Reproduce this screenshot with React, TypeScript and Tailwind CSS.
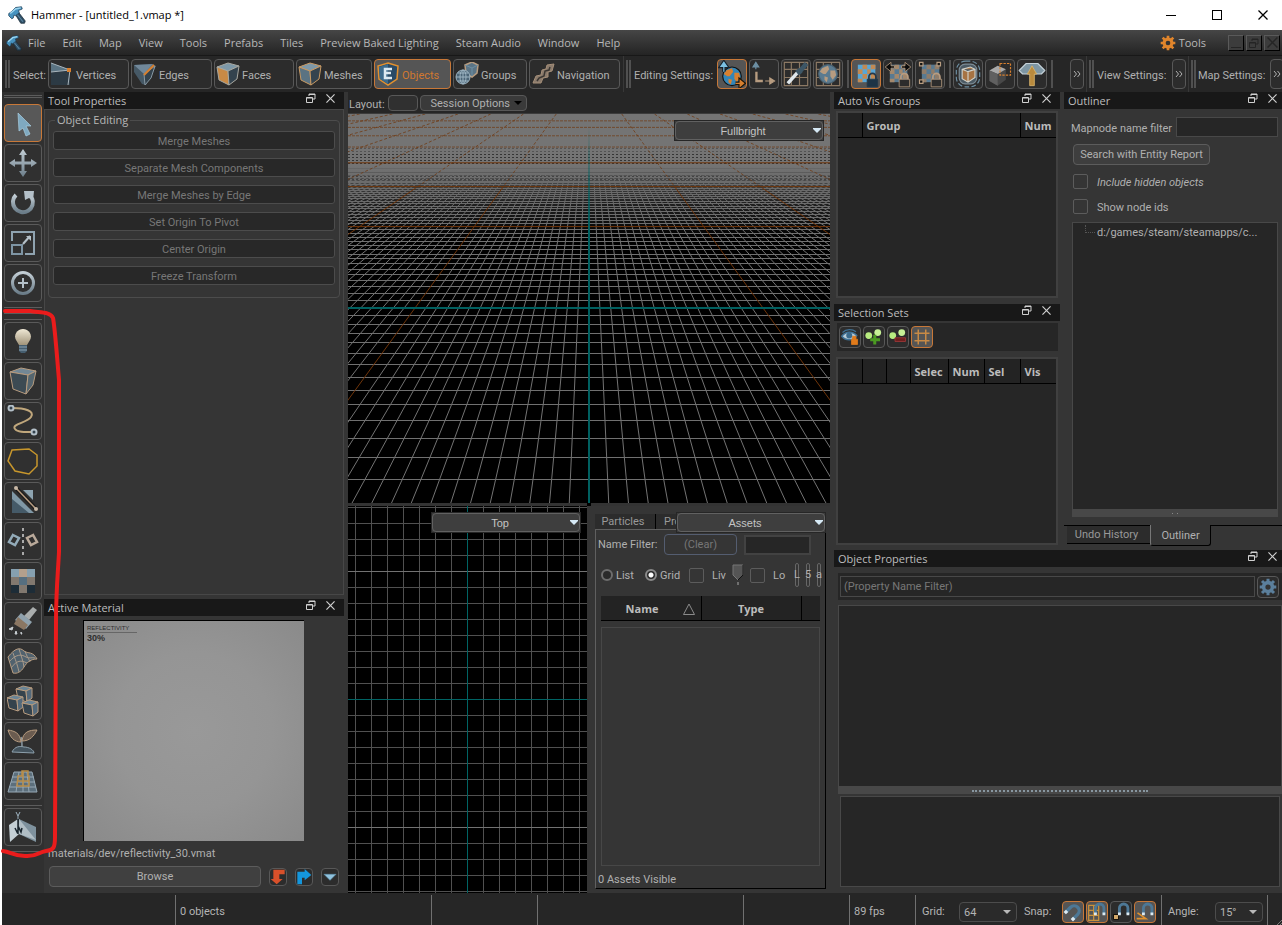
import type { ReactNode } from "react";
import clsx from "clsx";

const SLATE = "#6d8fa3";
const TAN = "#b79c80";
const STEEL = "#b4c0c8";
const ORANGE = "#d8802f";

const menuItems = [
  "File", "Edit", "Map", "View", "Tools", "Prefabs", "Tiles",
  "Preview Baked Lighting", "Steam Audio", "Window", "Help",
];

const objectActions = [
  "Merge Meshes",
  "Separate Mesh Components",
  "Merge Meshes by Edge",
  "Set Origin To Pivot",
  "Center Origin",
  "Freeze Transform",
];

/* ── Icons ── */

function Icon({ size = 24, children }: { size?: number; children: ReactNode }) {
  return (
    <svg width={size} height={size} viewBox="0 0 24 24" fill="none" className="shrink-0" aria-hidden="true">
      {children}
    </svg>
  );
}

function HammerLogo({ size }: { size: number }) {
  return (
    <Icon size={size}>
      <path d="M9 10L13 7L23 20L22 23H17Z" fill="#2f4f66" stroke="#1b2c39" />
      <path d="M12 11L20 21" stroke="#5c87a3" strokeWidth="1.500" />
      <path d="M1 10L4 8L10 2L18 1L19 4L14 6L15 9L10 13L8 12L7 16L5 17L1 13Z" fill="#4692bf" stroke="#1f4059" />
      <path d="M3 10L10 4L17 2.500" stroke="#9dd6f0" strokeWidth="2" />
    </Icon>
  );
}

function Cube({ top = "#7d98a8", left = "#4f6674", right = "#34434e", edge = "#8d9da6" }) {
  return (
    <g stroke={edge} strokeWidth="1" strokeLinejoin="round">
      <path d="M1 5L12 1L23 4L12 9Z" fill={top} />
      <path d="M1 5L12 9L13 23L3 18Z" fill={left} />
      <path d="M12 9L23 4L21 17L13 23Z" fill={right} />
    </g>
  );
}

const Vertices = () => (
  <Icon>
    <path d="M1 1L20 8V23H1Z" fill="#2c3a44" />
    <path d="M1 1L20 8L1 10Z" fill="#5b7483" />
    <path d="M1 1L20 8L18 23M20 8L1 10" stroke="#a9b5bc" />
    <rect x="17" y="6" width="4" height="4" fill={ORANGE} />
  </Icon>
);
const Edges = () => (
  <Icon>
    <path d="M1 3L20 2L23 4L13 23L9 22L1 10Z" fill="#465966" />
    <path d="M1 3L20 2L11 12Z" fill="#71889a" />
    <path d="M22 4L18 16L12 23L11 12Z" fill="#33424d" stroke="#8798a3" />
    <path d="M21 3L11 13" stroke={ORANGE} strokeWidth="2" />
  </Icon>
);
const Faces = () => <Icon><Cube left="#c98a45" edge="#a8a8a0" /></Icon>;
const Meshes = () => <Icon><Cube edge="#c99a63" left="#5b7382" /></Icon>;
const Objects = () => (
  <Icon>
    <path d="M12 1L22 4L21 17L12 23L3 17L2 4Z" fill="#294a66" stroke="#e2902e" strokeWidth="1.5" />
    <path d="M12 2V22L4 17L3 5Z" fill="#3d6b8c" />
    <path d="M16 7H9V16H16M9 11H15" stroke="#dbe9f2" strokeWidth="2.5" />
  </Icon>
);
const Groups = () => (
  <Icon>
    <path d="M10 3L17 0L23 3L22 11L17 15L11 12Z" fill="#5b7485" stroke={TAN} strokeWidth="1.5" />
    <path d="M10 3L17 6L23 3M17 6V14" stroke={SLATE} />
    <circle cx="8" cy="15" r="7" fill="#4b6577" stroke="#9db4c2" />
    <path d="M1 15H15M8 8V22M3 11H13M3 19H13" stroke="#9db4c2" />
    <ellipse cx="8" cy="15" rx="3" ry="7" stroke="#9db4c2" />
  </Icon>
);
const Navigation = () => (
  <Icon>
    <path d="M2 21L5 14L10 13L11 8L15 7L16 3L23 2L21 9L17 10L17 15L12 16L10 21Z" fill="#8b7b6c" stroke="#a58f79" />
    <path d="M6 19L8 16L13 14L14 9L18 8L19 5" stroke="#3a3632" strokeWidth="1.500" />
  </Icon>
);

const Globe = ({ cx = 12, cy = 12, r = 8, dim = false }) => (
  <g>
    <circle cx={cx} cy={cy} r={r} fill={dim ? "#5b7b90" : "#3486b8"} stroke={dim ? "#4a6272" : "#111"} />
    <path
      transform={`translate(${cx - 8} ${cy - 8})`}
      d="M3 3L8 1L9 4L6 8L4 8L1 6ZM10 5L14 5L15 9L12 13L10 10ZM5 10L8 11L7 15L5 13Z"
      fill={dim ? TAN : ORANGE}
    />
  </g>
);
const WorldSpace = () => (
  <Icon size={28}>
    <Globe cx={12} cy={14} />
    <path d="M5 10V4M2.500 5.500L5 2L7.500 5.500Z" stroke="#16222c" strokeWidth="3" />
    <path d="M5 10V4M2.500 5.500L5 2L7.500 5.500Z" stroke="#7cc0e2" fill="#7cc0e2" />
    <path d="M15 20H21M19 17.500L22 20L19 22.500Z" stroke="#1c1408" strokeWidth="3" />
    <path d="M15 20H21M19 17.500L22 20L19 22.500Z" stroke={ORANGE} fill={ORANGE} />
  </Icon>
);
const LocalSpace = () => (
  <Icon size={28}>
    <path d="M5 8V4M2.500 6L5 2L7.500 6Z" stroke={SLATE} fill={SLATE} />
    <path d="M5.500 10V18H11" stroke={TAN} strokeWidth="2" />
    <path d="M13 18H19M17 15.500L21 18L17 20.500Z" stroke={TAN} fill={TAN} />
  </Icon>
);
const GridLines = () => <path d="M2 2H22V22H2ZM2 8H22M2 15H22M8 2V22M15 2V22" stroke="#8c7964" />;
const GridPick = () => (
  <Icon size={28}>
    <GridLines />
    <path d="M5 20L14 10" stroke="#dfe7ec" strokeWidth="3" />
    <path d="M13 8L16 12M15 10L21 3" stroke="#3d5666" strokeWidth="4" />
  </Icon>
);
const GridGlobe = () => <Icon size={28}><GridLines /><Globe dim r={8} /></Icon>;

const Checker = ({ a = "#58a6d6", b = "#c28a54" }) => (
  <g>
    <path d="M5 4H20V19H5Z" fill={a} />
    <path d="M9 4H13V8H9ZM16 4H20V8H16ZM5 8H9V12H5ZM13 8H16V12H13ZM9 12H13V16H9ZM16 12H20V16H16ZM5 16H9V19H5ZM13 16H16V19H13Z" fill={b} />
  </g>
);
const Lock = ({ fill = "#1d3446", edge = "#8fa6b5" }) => (
  <g>
    <path d="M14.500 17V14.500A3 3 0 0 1 20.500 14.500V17" stroke={edge} strokeWidth="1.500" />
    <path d="M13 16.500H22V23H13Z" fill={fill} stroke={edge} strokeWidth=".7" />
  </g>
);
const TexLock = () => <Icon size={28}><Checker /><Lock edge="#24394a" /></Icon>;
const TexScale = () => (
  <Icon size={28}>
    <Checker a="#587a92" b="#a3886c" />
    <path d="M1 6L6 2V5H9V7H6V10ZM23 6L18 2V5H15V7H18V10Z" fill="#0c0c0c" stroke={TAN} strokeWidth=".7" />
    <Lock fill="#2c2c2c" edge={TAN} />
  </Icon>
);
const TexVertex = () => (
  <Icon size={28}>
    <Checker a="#587a92" b="#8f7c69" />
    <path d="M3 2H6V5H3ZM18 2H21V5H18ZM3 17H6V20H3Z" fill="#141414" stroke={TAN} />
    <Lock fill="#2c2c2c" edge={TAN} />
  </Icon>
);
const Isolate = () => (
  <Icon size={28}>
    <rect x="2" y="1" width="20" height="22" rx="8" stroke={SLATE} strokeDasharray="4 2" />
    <rect x="4.500" y="3.500" width="15" height="17" rx="5" fill="#4b5a64" stroke="#7c8b94" />
    <path d="M7 8L14 6L18 8V15L12 19L7 16ZM7 8L12 10L18 8M12 10V19" fill="#a67343" stroke="#d0d0c8" />
  </Icon>
);
const BoxSelect = () => (
  <Icon size={28}>
    <path d="M3 9L10 5L17 8V17L10 22L3 18Z" fill="#484848" />
    <path d="M3 9L10 5L17 8L10 12Z" fill="#a9a9a9" />
    <path d="M10 12V22L3 18V9Z" fill="#606060" />
    <path d="M12 3H21V13H12Z" stroke={ORANGE} strokeDasharray="2 1" />
  </Icon>
);
const CloudUp = () => (
  <Icon size={28}>
    <path d="M1 9L7 3H17L23 9L20 12H4Z" fill="#7e96a3" stroke="#c5d2d9" strokeLinejoin="round" />
    <path d="M12 5L16 12H14V22H10V12H8Z" fill="#b98a3d" stroke="#d9b56d" strokeWidth=".7" />
  </Icon>
);

/* tool strip drawings, 32px each */
const Tool = ({ children }: { children: ReactNode }) => (
  <svg width="32" height="32" viewBox="0 0 32 32" fill="none" aria-hidden="true">
    <defs>
      <linearGradient id="steel" x1="0" y1="0" x2="0" y2="1">
        <stop offset="0" stopColor="#c3ced5" />
        <stop offset="1" stopColor="#6b7d89" />
      </linearGradient>
      <linearGradient id="bulb" x1="0" y1="0" x2="0" y2="1">
        <stop offset="0" stopColor="#efe8d5" />
        <stop offset="1" stopColor="#a1947a" />
      </linearGradient>
    </defs>
    {children}
  </svg>
);

const SmallCube = ({ x, y }: { x: number; y: number }) => (
  <g transform={`translate(${x} ${y})`} stroke={TAN} strokeWidth="1" strokeLinejoin="round">
    <path d="M0 3L7 0L16 2L10 5Z" fill="#6a8495" />
    <path d="M0 3L10 5L11 16L2 13Z" fill="#35434d" />
    <path d="M10 5L16 2L16 12L11 16Z" fill="#54697a" />
  </g>
);

const transformTools: { name: string; art: ReactNode }[] = [
  { name: "Select", art: <path d="M11 6L24 19L19 19L23 27L19 29L16 21L12 24Z" fill="#7fa9c0" stroke="#a8cde0" strokeWidth=".7" /> },
  {
    name: "Translate",
    art: <path d="M16 2L20 8H17.500V14.500H24V12L30 16L24 20V17.500H17.500V24H20L16 30L12 24H14.500V17.500H8V20L2 16L8 12V14.500H14.500V8H12Z" fill="url(#steel)" />,
  },
  {
    name: "Rotate",
    art: (
      <>
        <path d="M9 8A10 10 0 1 0 25 11" stroke="url(#steel)" strokeWidth="4" />
        <path d="M17 4H27L26 14L22 11L18 13Z" fill="#b4c0c8" />
      </>
    ),
  },
  {
    name: "Scale",
    art: (
      <g stroke="#8fa3b0" strokeWidth="2">
        <path d="M5 14V5H27V27H18" />
        <path d="M5 18H15V27H5Z" stroke="#7e95a4" />
        <path d="M16 17L23 9" stroke={STEEL} />
        <path d="M19 9H24V14Z" fill={STEEL} stroke="none" />
      </g>
    ),
  },
  {
    name: "Pivot",
    art: (
      <>
        <circle cx="16" cy="16" r="10.500" stroke="url(#steel)" strokeWidth="3" />
        <path d="M16 11V21M11 16H21" stroke={STEEL} strokeWidth="2" />
      </>
    ),
  },
];

const createTools: { name: string; art: ReactNode }[] = [
  {
    name: "Entity",
    art: (
      <>
        <path d="M12 20H20V26L18 28H14L12 26Z" fill="#455d6e" />
        <path d="M12 22H20M12 25H20" stroke="#8aa2b2" />
        <path d="M16 4A8 7.500 0 0 0 9 15L12 20H20L23 15A8 7.500 0 0 0 16 4Z" fill="url(#bulb)" />
      </>
    ),
  },
  {
    name: "Block",
    art: (
      <g stroke={TAN} strokeWidth="1" strokeLinejoin="round">
        <path d="M3 7L14 3L29 6L21 10Z" fill="#728795" />
        <path d="M3 7L21 10L19 29L6 24Z" fill="#3c4a53" />
        <path d="M21 10L29 6L26 20L19 29Z" fill="#55666f" />
      </g>
    ),
  },
  {
    name: "Path",
    art: (
      <>
        <path d="M5 3C18 3 28 6 24 12C20 18 4 19 8 24C11 28 20 27 27 27" stroke="#c0a77c" strokeWidth="2" />
        <circle cx="4" cy="3" r="2.500" fill="#33424d" stroke={STEEL} strokeWidth="2" />
        <circle cx="27" cy="27" r="2.500" fill="#33424d" stroke={STEEL} strokeWidth="2" />
      </>
    ),
  },
  { name: "Polygon", art: <path d="M5 5L22 4L30 10V21L22 29L8 26L1 16Z" stroke="#c8972c" strokeWidth="1.500" /> },
  {
    name: "Clip",
    art: (
      <>
        <path d="M5 6V28H27Z" fill="#8098a6" />
        <path d="M5 14V28H22Z" fill="#455a68" />
        <path d="M16 5H26V15Z" fill="#8da3b0" />
        <path d="M9 3L29 24" stroke="#1c1c1c" strokeWidth="4" />
        <path d="M9 3L29 24" stroke={TAN} strokeWidth="1.500" />
        <circle cx="9" cy="3" r="2" fill="#c8b8a6" />
        <circle cx="29" cy="24" r="2" fill="#c8b8a6" />
      </>
    ),
  },
  {
    name: "Mirror",
    art: (
      <>
        <path d="M16 3V31" stroke="#a9a9a9" strokeWidth="2" strokeDasharray="3 3" />
        <path d="M6 10L12 13L8 20L2 17Z" stroke="#93abb9" strokeWidth="2.500" />
        <path d="M26 10L20 13L24 20L30 17Z" stroke="#b9a99a" strokeWidth="2.500" />
      </>
    ),
  },
  {
    name: "Texture",
    art: (
      <>
        <path d="M4 4H28V28H4Z" fill="#81786f" />
        <path d="M4 4H12V12H4ZM20 4H28V12H20Z" fill="#86a0b0" />
        <path d="M12 12H20V20H12Z" fill="#566f80" />
        <path d="M4 20H12V28H4ZM20 20H28V28H20Z" fill="#1d2c37" />
        <path d="M12 4H20V12H12Z" fill="#b3a08d" />
      </>
    ),
  },
  {
    name: "Paint",
    art: (
      <>
        <path d="M26 2L30 5L22 15L17 11Z" fill="#a9adad" />
        <path d="M14 8L25 17L19 24L8 15Z" fill="#8fa1ad" />
        <path d="M11 12L21 20L17 25L7 19Z" fill="#8b7763" />
        <path d="M2 24L6 22L5 25ZM9 26L10 29L8 29ZM14 27L15 29L14 29Z" fill="#c8ced2" stroke="#c8ced2" />
      </>
    ),
  },
  {
    name: "Displacement",
    art: (
      <>
        <path d="M1 12C8 3 13 2 17 6C21 9 26 6 30 14C24 14 20 17 17 22C14 27 10 29 6 28Z" fill="#51626e" stroke={TAN} />
        <path d="M6 8C8 14 10 18 12 27M12 4C14 11 16 15 17 22M18 6C20 12 22 14 23 17M2 17C9 9 14 9 19 12C23 14 25 12 28 13M4 23C10 15 14 15 20 18" stroke="#a99a8a" />
      </>
    ),
  },
  { name: "Instances", art: <><SmallCube x={9} y={1} /><SmallCube x={0} y={10} /><SmallCube x={15} y={15} /></> },
  {
    name: "Foliage",
    art: (
      <>
        <path d="M5 27C8 21 13 21 17 22C22 22 27 25 27 28Z" fill="#44535d" stroke="#8da0ac" />
        <path d="M15 22C15 18 15 14 14 12" stroke="#8b9aa3" strokeWidth="1.500" />
        <path d="M1 5C8 6 13 8 14 17C7 17 3 12 1 5Z" fill="#6b5c50" stroke={TAN} />
        <path d="M30 5C22 5 16 7 15 16C23 16 27 11 30 5Z" fill="#6b5c50" stroke={TAN} />
      </>
    ),
  },
  {
    name: "Tile editor",
    art: (
      <>
        <path d="M7 7H25L30 27H1Z" fill="#5c6f7c" stroke="#97a9b5" />
        <path d="M5 12H27M4 17H28M2 22H29M12 7L9 27M16 7V27M20 7L22 27" stroke="#97a9b5" />
        <path d="M11 11H15V6H21V11H22V21H10ZM10 16H22M16 6V21" stroke="#b78d4a" strokeWidth="1.500" />
      </>
    ),
  },
];

const foldArt = (
  <>
    <path d="M2 14L11 8L12 23L3 31Z" fill="#c4cfd5" />
    <path d="M12 8L29 16V31L12 23Z" fill="#7e919d" />
    <path d="M12 8L29 29L12 23Z" fill="#b0bdc4" />
    <path d="M11 8V23M8 17L10 21L12 17L14 21L15 17" stroke="#18242c" strokeWidth="1.500" />
    <path d="M9 1L11 5L13 1M11 5V8" stroke="#9fb3c0" />
  </>
);

const FloatIcon = () => (
  <svg width="10" height="10" viewBox="0 0 10 10" fill="none" stroke="currentColor" aria-hidden="true">
    <path d="M3 3V1H9V6H7M3 1.500H9" />
    <path d="M.5 4.500H6.500V9.500H.5ZM.5 5H6.500" />
  </svg>
);
const CloseIcon = ({ size = 9 }: { size?: number }) => (
  <svg width={size} height={size} viewBox="0 0 10 10" fill="none" stroke="currentColor" strokeWidth="1.300" aria-hidden="true">
    <path d="M.5 .5L9.500 9.500M9.500 .5L.5 9.500" />
  </svg>
);
const Gear = ({ size, color }: { size: number; color: string }) => (
  <Icon size={size}>
    <path d="M12 1V23M1 12H23M4 4L20 20M20 4L4 20" stroke={color} strokeWidth="4" />
    <circle cx="12" cy="12" r="6" stroke={color} strokeWidth="4.500" />
    <circle cx="12" cy="12" r="3.500" fill="#333" />
  </Icon>
);
const Magnet = ({ children, tilt = false }: { children?: ReactNode; tilt?: boolean }) => (
  <Icon size={20}>
    {children}
    <g transform={tilt ? "rotate(45 12 12)" : "translate(5 -1) scale(.85)"}>
      <path d="M6 18V10A6 6 0 0 1 18 10V18" stroke="#4d7896" strokeWidth="4" />
      <path d="M6 16V20M18 16V20" stroke="#dceaf2" strokeWidth="4" />
    </g>
  </Icon>
);

/* ── Shared controls ── */

function DockTitle({ children, pad = "pr-[9px]" }: { children: ReactNode; pad?: string }) {
  return (
    <header className={clsx("flex h-[17px] shrink-0 items-center bg-[#181818] pl-1", pad)}>
      <h2 className="flex-1 font-['Open_Sans',sans-serif] text-[11px] leading-4 text-[#bdbdbd]">{children}</h2>
      <div className="flex items-center gap-2.5 self-start pt-px text-[#d0d0d0]">
        <button aria-label="Float"><FloatIcon /></button>
        <button aria-label="Close"><CloseIcon /></button>
      </div>
    </header>
  );
}

const buttonSizes = { lg: "size-[30px]", sm: "size-[22px]", xs: "size-[18px]" };

function IconButton({ label, on, size = "lg", children }: { label: string; on?: boolean; size?: keyof typeof buttonSizes; children: ReactNode }) {
  return (
    <button
      aria-label={label}
      className={clsx(
        "flex shrink-0 items-center justify-center rounded border",
        buttonSizes[size],
        on ? "border-[#c87838] bg-[#555]" : "border-[#585858] bg-[#2c2c2c]",
      )}
    >
      {children}
    </button>
  );
}

function ModeButton({ width, on, icon, children }: { width: string; on?: boolean; icon: ReactNode; children: ReactNode }) {
  return (
    <button
      className={clsx(
        "flex h-[30px] shrink-0 items-center gap-0.5 rounded border pl-px",
        width,
        on ? "border-[#c87838] bg-[#555] text-[#d07830]" : "border-[#585858] bg-[#2c2c2c]",
      )}
    >
      {icon}
      <span className="pt-1">{children}</span>
    </button>
  );
}

function ToolButton({ label, on, children }: { label: string; on?: boolean; children: ReactNode }) {
  return (
    <button
      aria-label={label}
      className={clsx(
        "flex size-[38px] shrink-0 items-center justify-center rounded border",
        on ? "border-[#c87838] bg-[#585858]" : "border-[#5a5a5a] bg-[#303030]",
      )}
    >
      <Tool>{children}</Tool>
    </button>
  );
}

const Handle = () => <div className="h-7 w-[5px] shrink-0 border-x-2 border-[#505050]" />;
const Rule = () => <div className="ml-0.5 h-7 w-0.5 shrink-0 bg-[#505050]" />;

const More = () => (
  <button aria-label="More" className="flex h-[30px] w-[14px] shrink-0 items-center justify-center rounded border border-[#585858] bg-[#2c2c2c]">
    <svg width="8" height="8" viewBox="0 0 8 8" fill="none" stroke="#b0b0b0" aria-hidden="true">
      <path d="M1 1L3.500 4L1 7M4.500 1L7 4L4.500 7" />
    </svg>
  </button>
);

function ViewSelect({ label, value }: { label: string; value: string }) {
  return (
    <div className="relative h-[21px] w-[150px] border border-[#262626] bg-[#3c3c3c]">
      <select
        aria-label={label}
        className="h-full w-full appearance-none rounded border border-[#616161] bg-[#3e3e3e] pt-px pr-3 text-center font-['Liberation_Sans',sans-serif] text-[11px] text-[#c4c4c4] [text-align-last:center]"
      >
        <option>{value}</option>
      </select>
      <svg width="8" height="5" viewBox="0 0 8 5" className="pointer-events-none absolute top-[7px] right-0.5" aria-hidden="true">
        <path d="M0 0H8V1L4 5L0 1Z" fill="#d6e9f5" />
      </svg>
    </div>
  );
}

function StatusSelect({ label, value, width }: { label: string; value: string; width: string }) {
  return (
    <div className={clsx("relative h-5", width)}>
      <select aria-label={label} className="h-full w-full appearance-none rounded border border-[#4c4c4c] bg-[#2a2a2a] pt-px pl-1 text-[11px] text-[#b4b4b4]">
        <option>{value}</option>
      </select>
      <svg width="8" height="4" viewBox="0 0 8 4" className="pointer-events-none absolute top-2 right-1.5" aria-hidden="true">
        <path d="M0 0H8L4 4Z" fill="#b8b8b8" />
      </svg>
    </div>
  );
}

const checkbox = "size-[15px] shrink-0 appearance-none rounded-[2px] border border-[#5c5c5c] bg-[#353535]";
const headCell = "h-6 border-r border-b border-black bg-[#232323] px-1 pt-0.5 font-['Open_Sans',sans-serif] text-[11px] leading-4 font-bold text-[#bcbcbc] last:border-r-0";

/* ── 3D viewport: perspective floor grid ── */

const HORIZON = -45;
const CENTER = 241;
const floorY = (n: number) => HORIZON + 1 / (0.0041894 - 0.0001348 * n);

function PerspectiveView() {
  const rows: number[] = [];
  for (let n = -52; n <= 14; n++) if (n % 16 !== 0) rows.push(n);
  const cols: number[] = [];
  for (let n = -110; n <= 110; n++) if (n % 16 !== 0) cols.push(n);
  const major = [-7, -6, -5, -4, -3, -2, -1, 1, 2, 3, 4, 5, 6, 7];

  return (
    <svg viewBox="0 0 482 389" preserveAspectRatio="xMidYMid slice" className="absolute inset-0 h-full w-full bg-black" aria-hidden="true">
      <defs>
        <linearGradient id="haze" x1="0" y1="0" x2="0" y2="1">
          <stop offset="0" stopColor="#747474" />
          <stop offset=".4" stopColor="#747474" />
          <stop offset=".5" stopColor="#6c6c6c" stopOpacity=".75" />
          <stop offset=".7" stopColor="#606060" stopOpacity=".35" />
          <stop offset="1" stopColor="#606060" stopOpacity="0" />
        </linearGradient>
        <linearGradient id="axis" gradientUnits="userSpaceOnUse" x1="0" y1="0" x2="0" y2="120">
          <stop offset=".1" stopColor="#006464" stopOpacity="0" />
          <stop offset="1" stopColor="#006464" />
        </linearGradient>
      </defs>
      <g stroke="#737373">
        {cols.map((n) => {
          const top = 60;
          return (
            <line
              key={n}
              x1={CENTER + n * (top - HORIZON) * 0.0455} y1={top}
              x2={CENTER + n * (389 - HORIZON) * 0.0455} y2={389}
            />
          );
        })}
      </g>
      <g stroke="#707070" shapeRendering="crispEdges">
        {rows.map((n) => <line key={n} x1="0" x2="483" y1={floorY(n)} y2={floorY(n)} />)}
      </g>
      <rect width="483" height="125" fill="url(#haze)" />
      <g stroke="#1a1a1a" strokeDasharray="2 2">
        {[34, 37].map((y) => <line key={y} x1="0" x2="483" y1={y + 0.5} y2={y + 0.5} opacity=".35" />)}
        {[40, 43, 46, 49].map((y) => <line key={y} x1="0" x2="483" y1={y + 0.5} y2={y + 0.5} opacity=".7" />)}
        {[62, 65].map((y) => <line key={y} x1="0" x2="483" y1={y + 0.5} y2={y + 0.5} opacity=".5" />)}
      </g>
      <g stroke="#70350a">
        {major.map((n) => (
          <g key={n}>
            <line
              x1={CENTER + n * 45 * 0.728} y1="0" x2={CENTER + n * 119 * 0.728} y2="74"
              strokeDasharray="3 2" opacity=".7"
            />
            <line x1={CENTER + n * 119 * 0.728} y1="74" x2={CENTER + n * 434 * 0.728} y2="389" />
          </g>
        ))}
        {[-112, -96, -80, -64].map((n) => (
          <line key={n} x1="0" x2="483" y1={floorY(n)} y2={floorY(n)} strokeDasharray="3 1" opacity=".65" />
        ))}
        {[-48, -32, -16].map((n) => <line key={n} x1="0" x2="483" y1={floorY(n)} y2={floorY(n)} />)}
      </g>
      <path d="M0 194H483" stroke="#006060" strokeWidth="2" />
      <rect x="240" y="10" width="2" height="112" fill="url(#axis)" />
      <path d="M241 120V389" stroke="#006060" strokeWidth="2" />
    </svg>
  );
}

function TopView() {
  return (
    <svg className="absolute inset-0 h-full w-full bg-black" aria-hidden="true">
      <defs>
        <pattern id="cells" x="7" y="1" width="16" height="16" patternUnits="userSpaceOnUse">
          <path d="M0 .5H16M.5 0V16" stroke="#505050" />
        </pattern>
      </defs>
      <rect width="100%" height="100%" fill="url(#cells)" />
      <rect y="65" width="100%" height="1" fill="#727272" />
      <rect y="321" width="100%" height="1" fill="#727272" />
      <rect y="193" width="100%" height="1" fill="#006464" />
      <rect x="119" width="1" height="100%" fill="#006464" />
    </svg>
  );
}

/* ── Window sections ── */

function TitleBar() {
  return (
    <div className="flex h-[30px] shrink-0 items-center bg-white pr-3.5 pl-2 text-black">
      <HammerLogo size={18} />
      <h1 className="flex-1 pl-[5px] font-['Open_Sans',sans-serif] text-[11px]">Hammer - [untitled_1.vmap *]</h1>
      <div className="flex items-center gap-9">
        <button aria-label="Minimize" className="h-px w-2.5 bg-black" />
        <button aria-label="Maximize" className="size-2.5 border border-black" />
        <button aria-label="Close window"><CloseIcon size={10} /></button>
      </div>
    </div>
  );
}

function MenuBar() {
  return (
    <nav className="flex h-[25px] shrink-0 items-center bg-linear-to-b from-[#464646] to-[#242424] pr-[2px] pl-1 font-['Open_Sans',sans-serif] text-[11px] text-[#b8b8b8]">
      <HammerLogo size={16} />
      <div className="flex flex-1 gap-[17px] pl-1.5">
        {menuItems.map((item) => <button key={item} className="whitespace-nowrap">{item}</button>)}
      </div>
      <button className="flex items-center gap-[3px]">
        <Gear size={16} color="#e0852c" />
        Tools
      </button>
      <div className="ml-[22px] flex gap-0.5 text-[#252525]">
        <button aria-label="Minimize document" className="flex size-4 items-end justify-center border border-[#5a5a5a] border-r-black border-b-black bg-[#3c3c3c] pb-0.5">
          <span className="h-px w-2.5 bg-[#252525]" />
        </button>
        <button aria-label="Restore document" className="flex size-4 items-center justify-center border border-[#5a5a5a] border-r-black border-b-black bg-[#3c3c3c]"><FloatIcon /></button>
        <button aria-label="Close document" className="flex size-4 items-center justify-center border border-[#5a5a5a] border-r-black border-b-black bg-[#3c3c3c]"><CloseIcon size={11} /></button>
      </div>
    </nav>
  );
}

function Toolbar() {
  return (
    <div className="flex h-[37px] shrink-0 overflow-hidden border-t border-[#181818] bg-[#262626] whitespace-nowrap">
      <div className="flex w-[622px] shrink-0 items-center gap-0.5 border-r border-[#383838] pl-[3px]">
        <Handle />
        <span className="w-[34px] shrink-0 pt-1 pl-px">Select:</span>
        <ModeButton width="w-[81px]" icon={<Vertices />}>Vertices</ModeButton>
        <ModeButton width="w-[81px]" icon={<Edges />}>Edges</ModeButton>
        <ModeButton width="w-20" icon={<Faces />}>Faces</ModeButton>
        <ModeButton width="w-[76px]" icon={<Meshes />}>Meshes</ModeButton>
        <ModeButton width="w-[77px]" on icon={<Objects />}>Objects</ModeButton>
        <ModeButton width="w-[74px]" icon={<Groups />}>Groups</ModeButton>
        <ModeButton width="w-[91px]" icon={<Navigation />}>Navigation</ModeButton>
      </div>
      <div className="flex flex-1 items-center gap-0.5 border-r border-[#383838] px-0.5">
        <Handle />
        <span className="w-[82px] shrink-0 pt-1 pl-px">Editing Settings:</span>
        <IconButton label="World space" on><WorldSpace /></IconButton>
        <IconButton label="Local space"><LocalSpace /></IconButton>
        <IconButton label="Pick grid"><GridPick /></IconButton>
        <IconButton label="World grid"><GridGlobe /></IconButton>
        <Rule />
        <IconButton label="Texture lock" on><TexLock /></IconButton>
        <IconButton label="Texture scale lock"><TexScale /></IconButton>
        <IconButton label="Vertex texture lock"><TexVertex /></IconButton>
        <Rule />
        <IconButton label="Isolate"><Isolate /></IconButton>
        <IconButton label="Box select"><BoxSelect /></IconButton>
        <IconButton label="Cloud"><CloudUp /></IconButton>
        <Rule />
        <span className="flex-1" />
        <More />
      </div>
      <div className="flex w-[102px] shrink-0 items-center gap-0.5 border-r border-[#383838] px-0.5">
        <Handle />
        <span className="flex-1 pt-1 pl-px">View Settings:</span>
        <More />
      </div>
      <div className="flex w-[93px] shrink-0 items-center gap-0.5 pl-0.5">
        <Handle />
        <span className="w-[70px] shrink-0 pt-1">Map Settings:</span>
        <More />
      </div>
    </div>
  );
}

function ToolStrip() {
  return (
    <aside className="flex w-[42px] shrink-0 flex-col gap-0.5 bg-[#303030] px-0.5 pt-[3px]">
      <div className="mb-1 h-[3px] shrink-0 border-y border-[#5c5c5c]" />
      {transformTools.map((t, i) => (
        <ToolButton key={t.name} label={t.name} on={i === 0}>{t.art}</ToolButton>
      ))}
      <div className="mt-[3px] h-[7px] shrink-0 border-y border-[#5c5c5c]" />
      <div className="mt-[3px] h-px shrink-0 bg-[#5c5c5c]" />
      {createTools.map((t) => (
        <ToolButton key={t.name} label={t.name}>{t.art}</ToolButton>
      ))}
      <div className="mt-[3px] h-px shrink-0 bg-[#5c5c5c]" />
      <ToolButton label="Fold">{foldArt}</ToolButton>
      <div className="mt-[3px] h-px shrink-0 bg-[#5c5c5c]" />
    </aside>
  );
}

function LeftDock() {
  return (
    <div className="flex w-[300px] shrink-0 flex-col">
      <DockTitle>Tool Properties</DockTitle>
      <section className="flex-1 border border-[#474747] px-[3px] pt-0.5">
        <fieldset className="rounded border border-[#4c4c4c] px-1 pb-3">
          <legend className="ml-0.5 px-0.5 font-['Open_Sans',sans-serif] text-[11px] leading-4 text-[#b8b8b8]">Object Editing</legend>
          <div className="flex flex-col gap-2 pt-[3px]">
            {objectActions.map((a) => (
              <button key={a} disabled className="h-[19px] rounded-[3px] border border-[#4c4c4c] bg-[#282828] pt-0.5 leading-4 text-[#777]">{a}</button>
            ))}
          </div>
        </fieldset>
      </section>
      <div className="h-1 shrink-0" />
      <DockTitle>Active Material</DockTitle>
      <section className="flex h-[277px] shrink-0 flex-col pt-1">
        <div className="ml-[39px] size-[221px] shrink-0 border-t border-l border-black bg-[radial-gradient(circle,#999_0%,#959595_50%,#8a8a8a_100%)] px-[3px] pt-1 text-[#2e2e2e]">
          <div className="w-[50px] border-b border-[#666] font-['Liberation_Sans',sans-serif] text-[6px] leading-[7px]">REFLECTIVITY</div>
          <div className="font-['Liberation_Sans',sans-serif] text-[9px] leading-[11px] font-bold">30%</div>
        </div>
        <p className="pt-[5px] pl-1 leading-4">materials/dev/reflectivity_30.vmat</p>
        <div className="flex items-center gap-2 pt-1 pl-[5px]">
          <button className="h-[21px] w-[212px] rounded border border-[#5c5c5c] bg-[#404040] pt-px">Browse</button>
          <IconButton label="Pick material" size="xs">
            <Icon size={16}><path d="M5 1H22V8H14V15H19L10 23L1 15H5Z" fill="#d9502a" /></Icon>
          </IconButton>
          <IconButton label="Apply material" size="xs">
            <Icon size={16}><path d="M2 23V4H13V0L23 9L13 17V13H9V23Z" fill="#1496dc" /></Icon>
          </IconButton>
          <IconButton label="Material menu" size="xs">
            <Icon size={16}><path d="M3 8H21L12 17Z" fill="#8fc1dc" stroke="#5f90ab" /></Icon>
          </IconButton>
        </div>
      </section>
    </div>
  );
}

function AssetsPane() {
  return (
    <section className="relative flex min-w-0 flex-1 flex-col pt-[7px] pr-1 pb-1 pl-2">
      <div className="flex h-4 pt-px leading-4 text-[#999]">
        <button className="w-[61px] border-r border-black bg-[#2c2c2c] pr-1">Particles</button>
        <button className="w-20 bg-[#2c2c2c] pl-2 text-left">Props</button>
      </div>
      <div className="absolute top-[6px] right-1 z-10"><ViewSelect label="Pane type" value="Assets" /></div>
      <div className="flex flex-1 flex-col border border-[#606060] border-r-black border-b-black px-[5px]">
        <div className="-ml-[3px] flex items-center pt-1">
          <label htmlFor="asset-name" className="w-[66px] shrink-0 pt-px">Name Filter:</label>
          <button className="h-[21px] w-[73px] shrink-0 rounded border border-[#545d70] pt-px text-[#777]">(Clear)</button>
          <input id="asset-name" className="ml-[7px] h-5 w-[67px] min-w-0 border-2 border-[#424242] bg-[#262626]" />
        </div>
        <div className="mt-2 flex h-6 items-center">
          <input id="as-list" type="radio" name="mode" className="size-3 shrink-0 appearance-none rounded-full border-2 border-[#6d6d6d] bg-[#2a2a2a]" />
          <label htmlFor="as-list" className="w-8 shrink-0 pt-px pl-[3px]">List</label>
          <input id="as-grid" type="radio" name="mode" defaultChecked className="size-3 shrink-0 appearance-none rounded-full border-2 border-[#8a8a8a] bg-[radial-gradient(circle,#fff_0_2px,#2a2a2a_3px)]" />
          <label htmlFor="as-grid" className="w-8 shrink-0 pt-px pl-[3px]">Grid</label>
          <input id="as-live" type="checkbox" className={checkbox} />
          <label htmlFor="as-live" className="w-7 shrink-0 pt-px pl-2">Liv</label>
          <svg width="12" height="22" viewBox="0 0 12 22" className="shrink-0" aria-hidden="true">
            <path d="M1 1H11V11L6 16L1 11Z" fill="#555" stroke="#777" />
            <path d="M11 1V11L6 16" stroke="#111" fill="none" />
            <path d="M6 18V21" stroke="#aaa" />
          </svg>
          <input id="as-local" type="checkbox" className={clsx(checkbox, "ml-1.5")} />
          <label htmlFor="as-local" className="w-7 shrink-0 pt-px pl-2">Lo</label>
          <div className="flex gap-[7px] pl-0.5">
            {["L", "5", "a"].map((c) => (
              <button key={c} className="flex h-6 w-1 items-center justify-center rounded-full border border-[#666]">{c}</button>
            ))}
          </div>
        </div>
        <table className="mt-[9px] w-full table-fixed border-collapse">
          <thead>
            <tr>
              <th className={clsx(headCell, "w-[100px]")}>
                <span className="flex items-center justify-end gap-6 pr-0.5">
                  Name
                  <svg width="12" height="12" viewBox="0 0 12 12" fill="none" stroke="#8a8a8a" aria-hidden="true"><path d="M6 1L11.500 11.500H.5Z" /></svg>
                </span>
              </th>
              <th className={clsx(headCell, "w-[100px]")}>Type</th>
              <th className={headCell} />
            </tr>
          </thead>
        </table>
        <div className="mt-1.5 flex-1 border border-[#474747]" />
        <p className="-ml-[3px] pt-1.5 leading-4">0 Assets Visible</p>
      </div>
    </section>
  );
}

function Viewports() {
  return (
    <main className="ml-1 flex min-w-0 flex-1 flex-col">
      <div className="flex h-[22px] shrink-0 items-center gap-0.5 border-b border-[#3c3c3c] bg-[#262626] pl-px">
        <span className="w-[37px] pt-1">Layout:</span>
        <button aria-label="Layout" className="h-4 w-[30px] rounded border border-[#585858] bg-[#303030]" />
        <button className="flex h-4 w-[107px] items-center justify-end gap-1 rounded border border-[#585858] bg-[#3a3a3a] pr-1">
          <span className="pt-0.5">Session Options</span>
          <svg width="8" height="4" viewBox="0 0 8 4" aria-hidden="true"><path d="M0 0H8L4 4Z" fill="#000" /></svg>
        </button>
      </div>
      <div className="relative h-[389px] shrink-0 overflow-hidden">
        <PerspectiveView />
        <div className="absolute top-[6px] right-1.5"><ViewSelect label="Shading mode" value="Fullbright" /></div>
      </div>
      <div className="flex h-[3px] shrink-0 justify-center bg-[#333]"><span className="w-1 bg-black" /></div>
      <div className="flex min-h-0 flex-1">
        <div className="relative w-[239px] shrink-0 overflow-hidden">
          <TopView />
          <div className="absolute top-[6px] right-1.5"><ViewSelect label="View direction" value="Top" /></div>
        </div>
        <AssetsPane />
      </div>
    </main>
  );
}

function VisGroups() {
  return (
    <div className="flex w-[226px] shrink-0 flex-col">
      <DockTitle>Auto Vis Groups</DockTitle>
      <div className="mx-0.5 mt-0.5 h-[187px] border-2 border-[#404040] bg-[#262626]">
        <table className="w-full table-fixed border-collapse text-left">
          <thead>
            <tr>
              <th className={clsx(headCell, "w-6")} />
              <th className={headCell}>Group</th>
              <th className={clsx(headCell, "w-9")}>Num</th>
            </tr>
          </thead>
        </table>
      </div>
      <div className="h-1.5 shrink-0" />
      <DockTitle>Selection Sets</DockTitle>
      <div className="mt-0.5 mr-0.5 ml-[3px] flex h-7 shrink-0 items-center gap-0.5 bg-[#262626] pl-0.5">
        <IconButton label="Lock visibility" size="sm">
          <Icon size={18}>
            <path d="M1 11C6 4 16 4 21 10C17 17 7 18 1 11Z" fill="#b7cbd6" stroke="#3f7195" strokeWidth="2" />
            <path d="M2 6C7 1 15 1 20 5" stroke="#3f7195" strokeWidth="1.500" />
            <circle cx="11" cy="10" r="4" fill="#3a6a8c" />
            <path d="M14 15H22V22H14ZM15.500 15V11H20V15" fill="#e07a1a" stroke="#e07a1a" />
          </Icon>
        </IconButton>
        <IconButton label="Add set" size="sm">
          <Icon size={18}>
            <circle cx="5" cy="10" r="4.500" fill="#b8ec80" /><circle cx="17" cy="6" r="4.500" fill="#c6f096" />
            <path d="M13 9V22M7 15.500H20" stroke="#4b9a22" strokeWidth="4" />
          </Icon>
        </IconButton>
        <IconButton label="Remove set" size="sm">
          <Icon size={18}>
            <circle cx="5" cy="10" r="4.500" fill="#b8ec80" /><circle cx="17" cy="6" r="4.500" fill="#c6f096" />
            <path d="M8 13H22V18H8Z" fill="#6d1f1f" stroke="#a53a3a" />
          </Icon>
        </IconButton>
        <IconButton label="Toggle sets" size="sm" on>
          <Icon size={18}><path d="M7 2V22M17 2V22M2 7H22M2 17H22" stroke="#c88a45" strokeWidth="2" /></Icon>
        </IconButton>
      </div>
      <div className="mx-0.5 mt-1.5 mb-[5px] flex-1 border-2 border-[#404040] bg-[#262626]">
        <table className="w-full table-fixed border-collapse text-left">
          <thead>
            <tr>
              <th className={clsx(headCell, "w-6")} />
              <th className={clsx(headCell, "w-6")} />
              <th className={clsx(headCell, "w-6")} />
              <th className={headCell}>Selec</th>
              <th className={clsx(headCell, "w-9")}>Num</th>
              <th className={clsx(headCell, "w-9")}>Sel</th>
              <th className={clsx(headCell, "w-9")}>Vis</th>
            </tr>
          </thead>
        </table>
      </div>
    </div>
  );
}

function Outliner() {
  return (
    <div className="flex min-w-0 flex-1 flex-col">
      <DockTitle pad="pr-[5px]">Outliner</DockTitle>
      <div className="flex items-center justify-between pt-2 pr-1 pl-[7px]">
        <label htmlFor="mapnode" className="pt-1">Mapnode name filter</label>
        <input id="mapnode" className="h-5 w-[102px] border border-[#484848] bg-[#262626]" />
      </div>
      <div className="flex flex-col items-start gap-2 pt-[7px] pl-[9px]">
        <button className="h-[21px] w-[137px] rounded border border-[#5c5c5c] bg-[#3e3e3e] pt-px">Search with Entity Report</button>
        <label className="flex h-[17px] items-center gap-[9px] italic"><input type="checkbox" className={checkbox} /><span className="pt-0.5">Include hidden objects</span></label>
        <label className="flex h-[17px] items-center gap-[9px]"><input type="checkbox" className={checkbox} /><span className="pt-0.5">Show node ids</span></label>
      </div>
      <div className="mt-[7px] mr-1 ml-2 flex-1 border border-[#484848] bg-[#262626] pt-0.5">
        <div className="flex">
          <span className="ml-3 h-2 w-2.5 border-b border-l border-dotted border-[#555]" />
          <span className="pl-0.5 leading-4">d:/games/steam/steamapps/c...</span>
        </div>
      </div>
      <div className="mr-1 ml-2 flex h-[7px] shrink-0 items-center justify-center gap-1 bg-[#484848]">
        <span className="size-px bg-[#888]" /><span className="size-px bg-[#888]" />
      </div>
      <div className="mt-2 flex h-[25px] shrink-0 items-start">
        <div className="w-[3px] border-t border-black" />
        <button className="h-[19px] w-[83px] border-y border-black bg-[#2c2c2c] pt-px pr-1 text-[#999]">Undo History</button>
        <button className="h-[21px] w-[61px] rounded-b-[3px] border border-t-0 border-black border-l-[#777] pt-0.5">Outliner</button>
        <div className="flex-1 border-t border-black" />
      </div>
    </div>
  );
}

function ObjectProperties() {
  return (
    <div className="flex min-h-0 flex-1 flex-col">
      <DockTitle pad="pr-[5px]">Object Properties</DockTitle>
      <div className="mt-1.5 ml-1 flex h-[27px] shrink-0 items-center gap-0.5 bg-[#262626] pr-[3px] pl-0.5">
        <input
          aria-label="Property name filter"
          placeholder="(Property Name Filter)"
          className="h-[21px] min-w-0 flex-1 border border-[#484848] bg-[#262626] px-[3px] placeholder:text-[#777]"
        />
        <IconButton label="Property settings" size="sm"><Gear size={18} color="#5b7f9c" /></IconButton>
      </div>
      <div className="mt-[5px] ml-1 flex-1 border border-[#484848] bg-[#262626]" />
      <div className="ml-1 flex h-[7px] shrink-0 items-center justify-center bg-[#484848]">
        <span className="w-[176px] border-t-2 border-dotted border-[#8796a0]" />
      </div>
      <div className="mt-0.5 mr-0.5 mb-1.5 ml-1.5 h-[91px] shrink-0 border border-[#484848] bg-[#262626]" />
    </div>
  );
}

const statusCell = "flex items-center border-r border-[#707070] px-1";

function StatusBar() {
  return (
    <footer className="flex h-8 shrink-0 bg-[#262626] pt-0.5 text-[#b4b4b4]">
      <div className={clsx(statusCell, "w-[174px]")} />
      <div className={clsx(statusCell, "w-64 pt-1")}>0 objects</div>
      <div className={clsx(statusCell, "w-[106px]")} />
      <div className={clsx(statusCell, "w-[206px]")} />
      <div className={clsx(statusCell, "flex-1")} />
      <div className={clsx(statusCell, "w-[66px] pt-1")}>89 fps</div>
      <div className={clsx(statusCell, "w-[246px] pt-1 pl-1.5")}>
        <span className="w-[37px]">Grid:</span>
        <StatusSelect label="Grid size" value="64" width="w-[58px]" />
        <span className="w-[45px] pl-[7px]">Snap:</span>
        <div className="flex gap-0.5">
          <IconButton label="Snap" size="sm" on><Magnet tilt /></IconButton>
          <IconButton label="Snap to grid" size="sm" on>
            <Magnet><path d="M2 4H14V22H2ZM2 10H14M2 16H14M8 4V22" stroke="#c8923c" strokeWidth="1.500" /></Magnet>
          </IconButton>
          <IconButton label="Snap to vertex" size="sm">
            <Magnet><path d="M3 15H9V21H3Z" fill="#d2a768" stroke="#000" /></Magnet>
          </IconButton>
          <IconButton label="Snap angle" size="sm" on>
            <Magnet><path d="M3 13L13 20H2" stroke="#e0912c" strokeWidth="2" /></Magnet>
          </IconButton>
        </div>
      </div>
      <div className={clsx(statusCell, "w-[106px] justify-between pt-1 pl-1.5")}>
        Angle:
        <StatusSelect label="Angle" value="15°" width="w-12" />
      </div>
      <div className="flex w-[14px] items-end justify-end">
        <svg width="5" height="5" viewBox="0 0 5 5" aria-hidden="true"><path d="M0 5L5 0M3 5L5 3" stroke="#777" /></svg>
      </div>
    </footer>
  );
}

export default function App() {
  return (
    <div className="relative flex h-screen flex-col overflow-hidden bg-white font-['Roboto',sans-serif] text-[11px] leading-4 text-[#b0b0b0]">
      <TitleBar />
      <div className="ml-0.5 flex min-h-0 flex-1 flex-col bg-[#353535]">
        <MenuBar />
        <Toolbar />
        <div className="flex min-h-0 flex-1">
          <ToolStrip />
          <LeftDock />
          <Viewports />
          <div className="ml-1 flex w-[448px] shrink-0 flex-col">
            <div className="flex h-[458px] shrink-0 gap-1">
              <VisGroups />
              <Outliner />
            </div>
            <ObjectProperties />
          </div>
        </div>
        <StatusBar />
      </div>

      {/* hand-drawn marker around the creation tools */}
      <svg width="64" height="560" viewBox="0 0 64 560" fill="none" className="pointer-events-none absolute top-[302px] left-0" aria-hidden="true">
        <path
          d="M5 9H30C38 11 50 9 53 16C55 26 57 55 59 78V250C58 270 56 290 56 320L55 535C55 545 54 548 46 549C38 550 37 555 25 554C13 554 11 550 3 549"
          stroke="#ea1c1c" strokeWidth="4" strokeLinecap="round" strokeLinejoin="round"
        />
      </svg>
    </div>
  );
}
